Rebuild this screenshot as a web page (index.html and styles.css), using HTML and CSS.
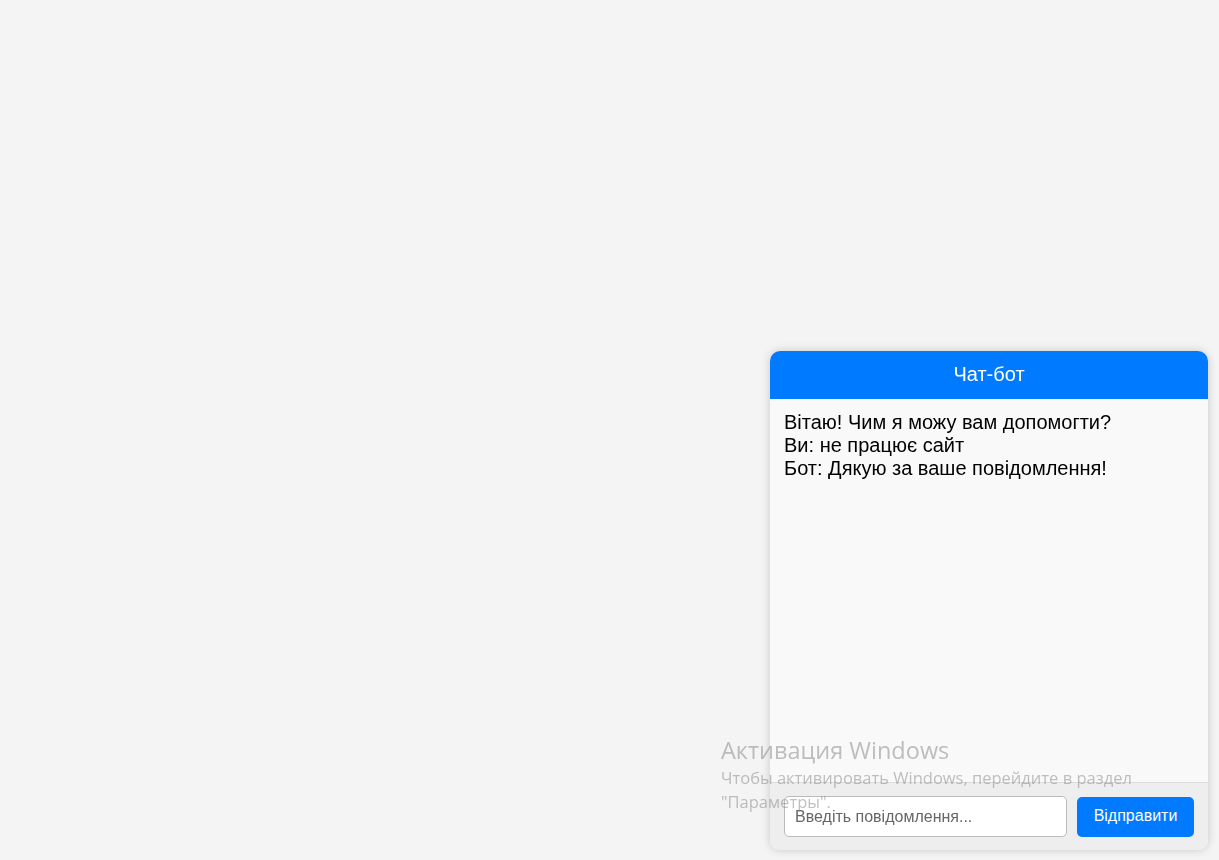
FILE: index.html
```html
<!DOCTYPE html>
<html lang="uk">
<head>
<meta charset="utf-8">
<title>Чат-бот</title>
<link rel="stylesheet" href="styles.css">
</head>
<body>
<div class="chat">
  <div class="chat-header">Чат-бот</div>
  <div class="chat-messages">
    <div class="msg">Вітаю! Чим я можу вам допомогти?</div>
    <div class="msg">Ви: не працює сайт</div>
    <div class="msg">Бот: Дякую за ваше повідомлення!</div>
  </div>
  <div class="chat-input">
    <input class="chat-field" type="text" placeholder="Введіть повідомлення...">
    <button class="chat-send">Відправити</button>
  </div>
</div>
<div class="watermark">
  <div class="wm-title">Активация Windows</div>
  <div class="wm-text">Чтобы активировать Windows, перейдите в раздел "Параметры".</div>
</div>
</body>
</html>
```
FILE: styles.css
```css
html, body {
  margin: 0;
  padding: 0;
  height: 100%;
}
body {
  background: #f4f4f4;
  font-family: "Liberation Sans", Arial, sans-serif;
}
.chat {
  position: fixed;
  right: 11px;
  bottom: 10px;
  width: 438px;
  height: 499px;
  display: flex;
  flex-direction: column;
  background: #f9f9f9;
  border-radius: 10px;
  box-shadow: 0 0 10px rgba(0, 0, 0, 0.18);
  overflow: hidden;
}
.chat-header {
  height: 48px;
  flex: none;
  background: #007bff;
  color: #fff;
  font-size: 20px;
  display: flex;
  align-items: center;
  justify-content: center;
  padding-bottom: 1px;
  box-sizing: border-box;
}
.chat-messages {
  flex: 1;
  padding: 12px 14px;
  font-size: 20px;
  line-height: 23px;
  color: #000;
}
.chat-input {
  flex: none;
  display: flex;
  align-items: center;
  gap: 10px;
  padding: 13px 14px 13px 14px;
  border-top: 1px solid #ddd;
  background: #eeeeee;
}
.chat-field {
  flex: 1;
  height: 41px;
  box-sizing: border-box;
  border: 1px solid #bbb;
  border-radius: 5px;
  padding: 0 10px;
  font-family: "Liberation Sans", Arial, sans-serif;
  font-size: 16px;
  background: #fff;
}
.chat-field::placeholder {
  color: #666;
}
.chat-send {
  width: 117px;
  height: 40px;
  border: none;
  border-radius: 5px;
  background: #007bff;
  color: #fff;
  font-family: "Liberation Sans", Arial, sans-serif;
  font-size: 16px;
  padding-bottom: 2px;
}
.watermark {
  position: fixed;
  left: 721px;
  top: 735px;
  width: 460px;
  color: rgba(140, 140, 140, 0.55);
  font-family: "Open Sans", "Noto Sans", sans-serif;
  pointer-events: none;
}
.wm-title {
  font-size: 23.5px;
  line-height: 31px;
}
.wm-text {
  font-size: 16.5px;
  line-height: 24px;
  width: 440px;
}
```
